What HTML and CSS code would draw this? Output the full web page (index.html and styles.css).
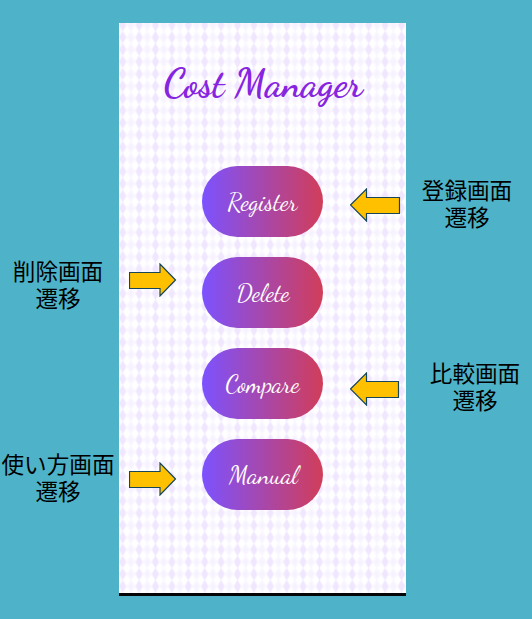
FILE: index.html
```
<!DOCTYPE html>
<html lang="ja">
<head>
<meta charset="utf-8">
<title>Cost Manager</title>
<link rel="stylesheet" href="styles.css">
</head>
<body>
<main class="board">
  <aside class="notes notes-left">
    <p class="note note-delete">削除画面<br>遷移</p>
    <p class="note note-manual">使い方画面<br>遷移</p>
  </aside>
  <section class="phone">
    <svg class="argyle" width="287" height="571" aria-hidden="true">
      <defs>
        <pattern id="argyle" x="11.9" y="8.2" width="16.4" height="12.2" patternUnits="userSpaceOnUse">
          <path d="M8.2 0 16.4 12.2M8.2 0 0 12.2M0 0 8.2 12.2 16.4 0" fill="none" stroke="#faf7ff" stroke-width="1.2"/>
          <path d="M8.2 0.1 11.6 6.1 8.2 12.1 4.8 6.1Z" fill="#f0e7ff"/>
          <path d="M0 1.4 3 6.1 0 10.8ZM16.4 1.4 13.4 6.1 16.4 10.8Z" fill="#f7f2ff"/>
        </pattern>
      </defs>
      <rect width="287" height="571" fill="url(#argyle)"/>
    </svg>
    <h1 class="title"><svg class="lettering" width="287" height="64"><text x="44.5" y="43" textLength="199" lengthAdjust="spacingAndGlyphs">Cost Manager</text></svg></h1>
    <nav class="menu">
      <button class="pill"><svg class="lettering" width="121" height="71"><text x="25.5" y="44" textLength="70" lengthAdjust="spacingAndGlyphs">Register</text></svg></button>
      <button class="pill"><svg class="lettering" width="121" height="71"><text x="34.5" y="44" textLength="53" lengthAdjust="spacingAndGlyphs">Delete</text></svg></button>
      <button class="pill"><svg class="lettering" width="121" height="71"><text x="23.5" y="44" textLength="74" lengthAdjust="spacingAndGlyphs">Compare</text></svg></button>
      <button class="pill"><svg class="lettering" width="121" height="71"><text x="27" y="44" textLength="69" lengthAdjust="spacingAndGlyphs">Manual</text></svg></button>
    </nav>
    <svg class="arrow arrow-register" width="51" height="34"><path d="M.5 17 16.5 1V9.5H49.5V25.5H16.5V33Z"/></svg>
    <svg class="arrow arrow-delete" width="49" height="34"><path d="M46.5 17 31 1V9.5H.5V25.5H31V33Z"/></svg>
    <svg class="arrow arrow-compare" width="50" height="34"><path d="M.5 17 16.5 1V9.5H48.5V25.5H16.5V33Z"/></svg>
    <svg class="arrow arrow-manual" width="49" height="34"><path d="M46.5 17 31 1V9.5H.5V25.5H31V33Z"/></svg>
  </section>
  <aside class="notes notes-right">
    <p class="note note-register">登録画面<br>遷移</p>
    <p class="note note-compare">比較画面<br>遷移</p>
  </aside>
</main>
</body>
</html>
```
FILE: styles.css
```
* { box-sizing: border-box; }
body { margin: 0; background: #4eb3c8; }
.board {
  display: grid;
  grid-template-columns: 119px 287px 126px;
  height: 619px;
  overflow: hidden;
}
.notes { display: flex; flex-direction: column; align-items: center; }
.notes-left { padding: 257px 3px 0 0; }
.notes-right { padding-top: 176px; }
.note {
  margin: 0;
  font: 22.6px/27px "Noto Sans CJK JP", sans-serif;
  color: #000;
  text-align: center;
  white-space: nowrap;
}
.note-manual { margin-top: 139px; }
.note-register { margin-right: 4px; }
.note-compare { margin: 129px 0 0 12px; }
.phone {
  position: relative;
  height: 573px;
  margin-top: 23px;
  padding-top: 30px;
  background: #fff;
  border-bottom: 3px solid #050505;
}
.argyle { position: absolute; top: 0; left: 0; height: 570px; }
.title {
  position: relative;
  margin: 0;
  height: 64px;
  font: 700 38.5px "Dancing Script", cursive;
  fill: #8724e0;
}
.lettering { display: block; }
.menu {
  position: relative;
  display: flex;
  flex-direction: column;
  align-items: center;
  gap: 20px;
  margin-top: 49px;
}
.pill {
  width: 121px;
  height: 71px;
  padding: 0;
  border: 0;
  border-radius: 36px;
  background: linear-gradient(90deg, #7c52ff, #d13d59);
  font: 400 24px "Dancing Script", cursive;
  fill: #fff;
}
.arrow { position: absolute; fill: #ffc000; stroke: #17465a; stroke-width: 1.2; }
.arrow-register { left: 231px; top: 165px; }
.arrow-delete { left: 10px; top: 240px; }
.arrow-compare { left: 231px; top: 349px; }
.arrow-manual { left: 10px; top: 439px; }
```
